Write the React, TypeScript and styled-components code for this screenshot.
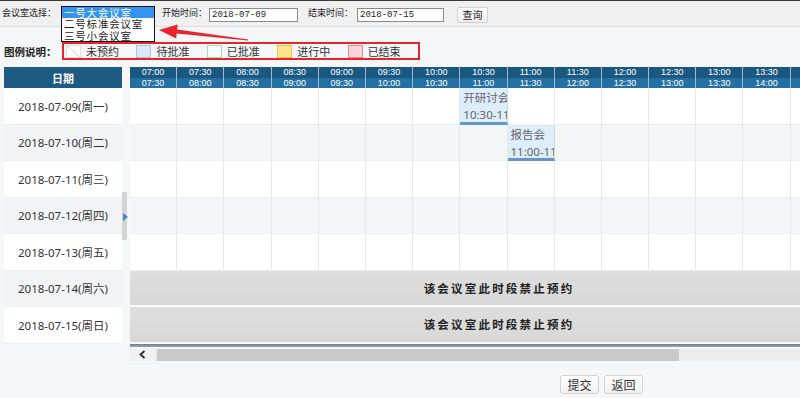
import React from 'react';
import styled, { createGlobalStyle } from 'styled-components';

const GlobalStyle = createGlobalStyle`
  html, body { margin: 0; padding: 0; }
  body {
    background: #f5f6f8;
    font-family: "Noto Sans", "Noto Sans CJK SC", sans-serif;
    color: #333;
  }
`;

const Page = styled.div`
  position: relative;
  width: 800px;
  height: 398px;
  overflow: hidden;
  background: #f5f6f8;
`;

/* ---------- top search bar ---------- */
const TopBar = styled.div`
  display: flex;
  align-items: flex-start;
  height: 25px;
  padding-left: 2px;
  background: #f0f0f0;
  border-top: 1px solid #3c3c3c;
  border-bottom: 1px solid #dedede;
`;

const BarLabel = styled.span<{ $ml?: number }>`
  margin-left: ${(p) => p.$ml ?? 0}px;
  font-family: "Noto Sans CJK SC", sans-serif;
  font-size: 9px;
  line-height: 24px;
  color: #222;
  white-space: nowrap;
`;

const ListBox = styled.div`
  position: relative;
  z-index: 2;
  margin-left: 5px;
  margin-top: 5px;
  width: 94px;
  height: 36px;
  box-sizing: border-box;
  border: 1px solid #111;
  background: #fff;
  overflow: hidden;
`;

const Option = styled.div<{ $selected?: boolean }>`
  height: 11.33px;
  line-height: 11.33px;
  padding-left: 2px;
  font-family: "Noto Sans CJK SC", sans-serif;
  font-size: 10.5px;
  letter-spacing: 0.8px;
  white-space: nowrap;
  color: ${(p) => (p.$selected ? '#fff' : '#222')};
  background: ${(p) => (p.$selected ? '#3394f0' : 'transparent')};
`;

const DateInput = styled.input<{ $w: number; $ml: number }>`
  margin-left: ${(p) => p.$ml}px;
  margin-top: 7px;
  width: ${(p) => p.$w}px;
  height: 14px;
  box-sizing: border-box;
  padding: 0 2px;
  border: 1px solid #8a8a8a;
  border-radius: 0;
  background: #fff;
  font-family: "Liberation Mono", monospace;
  font-size: 9px;
  line-height: 12px;
  color: #222;
  outline: none;
`;

const QueryButton = styled.button`
  margin-left: 13px;
  margin-top: 6px;
  width: 31px;
  height: 16px;
  padding: 0;
  border: 1px solid #cfcfcf;
  border-radius: 2px;
  background: linear-gradient(#ffffff, #ededed);
  font-family: "Noto Sans CJK SC", sans-serif;
  font-size: 10px;
  line-height: 14px;
  color: #222;
`;

/* ---------- legend ---------- */
const LegendRow = styled.div`
  display: flex;
  align-items: center;
  height: 18px;
  margin-top: 15px;
  padding-left: 4px;
`;

const LegendTitle = styled.span`
  width: 58px;
  font-family: "Noto Sans CJK SC", sans-serif;
  font-size: 10.5px;
  font-weight: bold;
  color: #222;
  white-space: nowrap;
`;

const LegendBox = styled.div`
  display: flex;
  align-items: center;
  box-sizing: border-box;
  width: 358px;
  height: 18px;
  padding-left: 2px;
  border: 2px solid #e8242a;
`;

const LegendItem = styled.div`
  display: flex;
  align-items: center;
  width: 71px;
`;

type Kind = 'free' | 'pending' | 'approved' | 'ongoing' | 'ended';

const swatchBg: Record<Kind, string> = {
  free: 'linear-gradient(to top right, #fff calc(50% - 0.6px), #c9c9c9 50%, #fff calc(50% + 0.6px))',
  pending: '#dbe9f8',
  approved: '#f6fcf8',
  ongoing: '#fde68f',
  ended: '#f8d6db',
};
const swatchBorder: Record<Kind, string> = {
  free: '#e0e0e0',
  pending: '#a6c7ea',
  approved: '#a8dcb8',
  ongoing: '#f4c23b',
  ended: '#e38a95',
};

const Swatch = styled.span<{ $kind: Kind }>`
  width: 15px;
  height: 13px;
  box-sizing: border-box;
  border: 1px solid ${(p) => swatchBorder[p.$kind]};
  background: ${(p) => swatchBg[p.$kind]};
`;

const LegendText = styled.span`
  margin-left: 5px;
  font-family: "Noto Sans CJK SC", sans-serif;
  font-size: 11px;
  color: #333;
  white-space: nowrap;
`;

/* ---------- schedule board ---------- */
const ROW_H = 36.5;
const COL_W = 47.2;

const Board = styled.div`
  display: flex;
  margin-top: 7px;
  padding-left: 4px;
`;

const DateCol = styled.div`
  display: flex;
  flex-direction: column;
  width: 118px;
`;

const DateHead = styled.div`
  height: 21px;
  display: flex;
  align-items: center;
  justify-content: center;
  background: #1d5b85;
  color: #fff;
  font-family: "Noto Sans CJK SC", sans-serif;
  font-size: 11px;
  font-weight: bold;
`;

const DateCell = styled.div<{ $alt?: boolean }>`
  height: ${ROW_H}px;
  box-sizing: border-box;
  display: flex;
  align-items: center;
  justify-content: center;
  background: ${(p) => (p.$alt ? '#f2f3f5' : '#fff')};
  border-bottom: 1px solid #eceef0;
  font-size: 11.5px;
  color: #333;
  white-space: nowrap;
`;

const Splitter = styled.div`
  position: relative;
  width: 8px;
`;

const SplitThumb = styled.div`
  margin-top: 125px;
  width: 5px;
  height: 48px;
  background: #d4d4d4;
`;

const SplitArrow = styled.span`
  position: absolute;
  top: 146px;
  left: 1px;
  width: 0;
  height: 0;
  border-left: 5px solid #3b86d6;
  border-top: 4px solid transparent;
  border-bottom: 4px solid transparent;
`;

const GridPane = styled.div`
  display: flex;
  flex-direction: column;
  width: 670px;
  overflow: hidden;
`;

const Track = styled.div`
  display: flex;
  flex-direction: column;
  width: 738px;
`;

const HeaderRow = styled.div`
  display: flex;
  height: 21px;
`;

const TimeHead = styled.div`
  flex: 0 0 ${COL_W}px;
  box-sizing: border-box;
  display: flex;
  flex-direction: column;
  border-right: 1px solid #9dbcd3;
`;

const TimeHalf = styled.span<{ $lower?: boolean }>`
  height: 10.5px;
  line-height: 10.5px;
  text-align: center;
  font-family: "Liberation Sans", sans-serif;
  font-size: 9px;
  color: #fff;
  background: ${(p) => (p.$lower ? '#2570a3' : '#1b5880')};
`;

const GridRow = styled.div<{ $alt?: boolean }>`
  display: flex;
  height: ${ROW_H}px;
  background: ${(p) => (p.$alt ? '#f4f5f7' : '#fff')};
`;

const Cell = styled.div`
  flex: 0 0 ${COL_W}px;
  box-sizing: border-box;
  border-right: 1px solid #e6e8eb;
  border-bottom: 1px solid #eceef0;
`;

const Booking = styled(Cell)`
  padding: 1px 0 0 3px;
  overflow: hidden;
  white-space: nowrap;
  background: #ddedfb;
  border-right-color: #bfe3c9;
  border-bottom: 3px solid #6196ca;
  font-size: 11.5px;
  line-height: 17px;
  color: #666;
`;

const BlockedRow = styled.div`
  height: ${ROW_H}px;
  box-sizing: border-box;
  display: flex;
  align-items: center;
  justify-content: center;
  background: linear-gradient(#dedede, #d8d8d8);
  border-bottom: 2px solid #fafafa;
  font-family: "Noto Sans CJK SC", sans-serif;
  font-size: 11.5px;
  font-weight: bold;
  letter-spacing: 2.2px;
  color: #222;
`;

const DarkBar = styled.div`
  height: 3px;
  background: linear-gradient(#6e7e8a, #9aa6af);
`;

const HScroll = styled.div`
  display: flex;
  height: 12px;
  margin-top: 2px;
  background: #ececec;
`;

const ScrollBtn = styled.div`
  display: flex;
  align-items: center;
  justify-content: center;
  width: 25px;
  background: #f1f1f1;
`;

const ScrollThumb = styled.div`
  width: 522px;
  margin-left: 2px;
  background: #c9c9c9;
`;

/* ---------- footer ---------- */
const Footer = styled.div`
  display: flex;
  gap: 5px;
  margin-top: 14px;
  padding-left: 560px;
`;

const ActionButton = styled.button`
  width: 39px;
  height: 19px;
  padding: 0;
  border: 1px solid #d2d2d2;
  border-radius: 3px;
  background: linear-gradient(#ffffff, #f0f0f0);
  font-family: "Noto Sans CJK SC", sans-serif;
  font-size: 12px;
  line-height: 17px;
  color: #333;
`;

/* annotation arrow lying over the page */
const Annotation = styled.svg`
  position: absolute;
  left: 155px;
  top: 20px;
  z-index: 3;
  pointer-events: none;
`;

const pad = (n: number) => (n < 10 ? `0${n}` : `${n}`);
const slot = (i: number) => {
  const m = 7 * 60 + i * 30;
  return `${pad(Math.floor(m / 60))}:${pad(m % 60)}`;
};
const columns = Array.from({ length: 16 }, (_, i) => [slot(i), slot(i + 1)]);

type Day = { date: string; blocked?: boolean; bookings?: Record<number, [string, string]> };
const days: Day[] = [
  { date: '2018-07-09(周一)', bookings: { 7: ['开研讨会', '10:30-11:00'] } },
  { date: '2018-07-10(周二)', bookings: { 8: ['报告会', '11:00-11:30'] } },
  { date: '2018-07-11(周三)' },
  { date: '2018-07-12(周四)' },
  { date: '2018-07-13(周五)' },
  { date: '2018-07-14(周六)', blocked: true },
  { date: '2018-07-15(周日)', blocked: true },
];

const legend: [Kind, string][] = [
  ['free', '未预约'],
  ['pending', '待批准'],
  ['approved', '已批准'],
  ['ongoing', '进行中'],
  ['ended', '已结束'],
];

export default function App() {
  return (
    <Page>
      <GlobalStyle />
      <TopBar>
        <BarLabel>会议室选择：</BarLabel>
        <ListBox>
          <Option $selected>一号大会议室</Option>
          <Option>二号标准会议室</Option>
          <Option>三号小会议室</Option>
        </ListBox>
        <BarLabel $ml={7}>开始时间：</BarLabel>
        <DateInput $w={89} $ml={2} readOnly defaultValue="2018-07-09" />
        <BarLabel $ml={10}>结束时间：</BarLabel>
        <DateInput $w={87} $ml={4} readOnly defaultValue="2018-07-15" />
        <QueryButton>查询</QueryButton>
      </TopBar>

      <LegendRow>
        <LegendTitle>图例说明：</LegendTitle>
        <LegendBox>
          {legend.map(([k, t]) => (
            <LegendItem key={k}>
              <Swatch $kind={k} />
              <LegendText>{t}</LegendText>
            </LegendItem>
          ))}
        </LegendBox>
      </LegendRow>

      <Board>
        <DateCol>
          <DateHead>日期</DateHead>
          {days.map((d, i) => (
            <DateCell key={d.date} $alt={i % 2 === 1}>
              {d.date}
            </DateCell>
          ))}
        </DateCol>
        <Splitter>
          <SplitThumb />
          <SplitArrow />
        </Splitter>
        <GridPane>
          <Track>
            <HeaderRow>
              {columns.map(([a, b]) => (
                <TimeHead key={a}>
                  <TimeHalf>{a}</TimeHalf>
                  <TimeHalf $lower>{b}</TimeHalf>
                </TimeHead>
              ))}
            </HeaderRow>
            {days.map((d, i) =>
              d.blocked ? (
                <BlockedRow key={d.date}>该会议室此时段禁止预约</BlockedRow>
              ) : (
                <GridRow key={d.date} $alt={i % 2 === 1}>
                  {columns.map(([a], c) => {
                    const b = d.bookings?.[c];
                    return b ? (
                      <Booking key={a}>
                        {b[0]}
                        <br />
                        {b[1]}
                      </Booking>
                    ) : (
                      <Cell key={a} />
                    );
                  })}
                </GridRow>
              )
            )}
          </Track>
          <DarkBar />
          <HScroll>
            <ScrollBtn>
              <svg width="7" height="9" viewBox="0 0 7 9">
                <polyline points="5.5,1 1.5,4.5 5.5,8" fill="none" stroke="#2a2a2a" strokeWidth="1.8" />
              </svg>
            </ScrollBtn>
            <ScrollThumb />
          </HScroll>
        </GridPane>
      </Board>

      <Footer>
        <ActionButton>提交</ActionButton>
        <ActionButton>返回</ActionButton>
      </Footer>

      <Annotation width="100" height="26" viewBox="0 0 100 26">
        <polygon
          points="4,10 22.6,4.5 22.1,9.6 93.1,19.4 92.9,20.6 21.7,13.4 21.2,18.5"
          fill="#e8242a"
        />
      </Annotation>
    </Page>
  );
}
